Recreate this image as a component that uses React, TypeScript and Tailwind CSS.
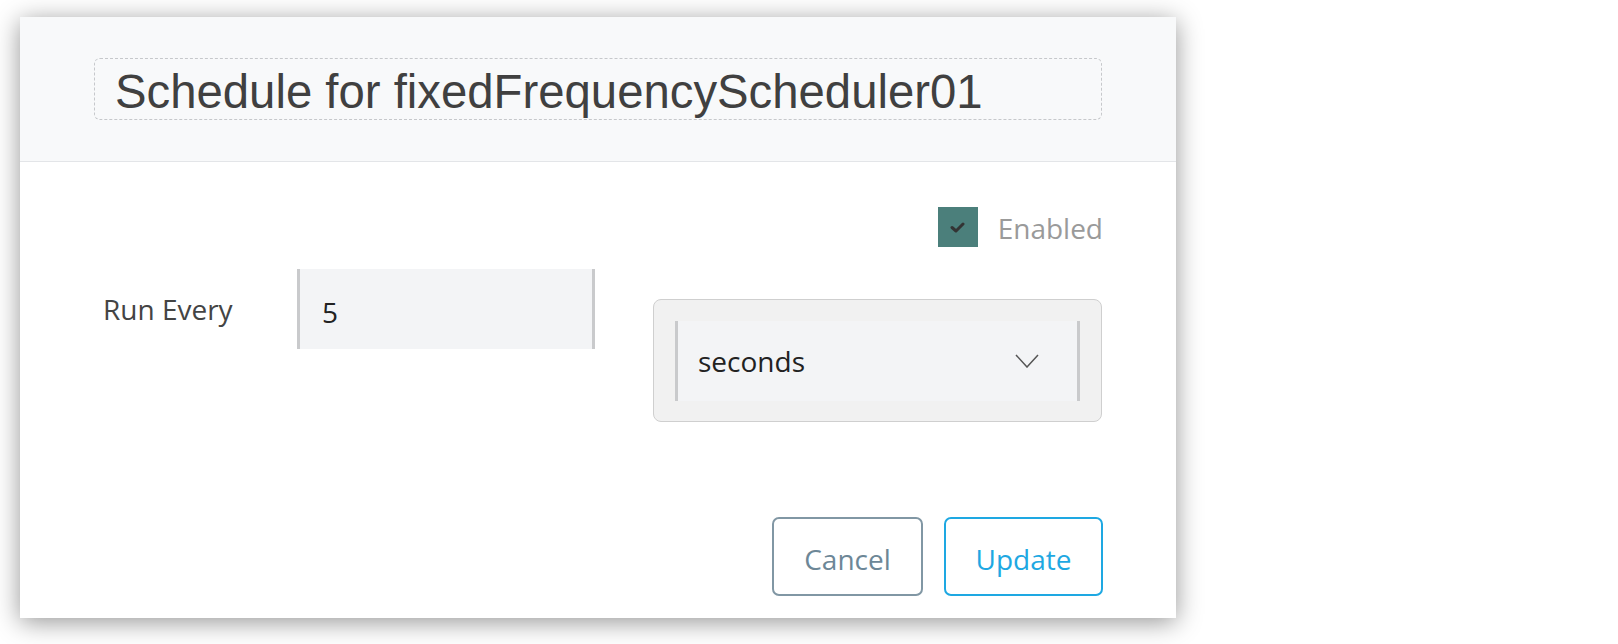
export default function App() {
  return (
    <main className="min-h-screen w-full bg-white pl-[20px] pt-[17px] font-['Open_Sans',sans-serif]">
      <div className="flex h-[601px] w-[1156px] flex-col bg-white shadow-[0_4px_24px_rgba(0,0,0,0.42)]">
        {/* header */}
        <div className="h-[145px] border-b border-[#e3e5e8] bg-[#f8f9fa] px-[74px] pt-[41px]">
          <div className="flex h-[62px] items-center rounded-[6px] border border-dashed border-[#c6c8cb] pl-[20px] pt-[5px]">
            <h1 className="font-['Liberation_Sans',Arial,sans-serif] text-[47.3px] leading-none text-[#404040]">
              Schedule for fixedFrequencyScheduler01
            </h1>
          </div>
        </div>

        {/* body */}
        <div className="flex flex-1 flex-col px-[73px] pt-[45px] pb-[22px]">
          <div className="flex h-[40px] items-center justify-end">
            <div className="flex h-[40px] w-[40px] items-center justify-center bg-[#4b7f7b]">
              <svg width="15" height="11" viewBox="0 0 15 11" fill="none">
                <path d="M2 5.5 L6 9 L13 2" stroke="#333" strokeWidth="3" strokeLinecap="round" strokeLinejoin="round" />
              </svg>
            </div>
            <span className="ml-[20px] pt-[2px] text-[28px] leading-[36px] text-[#9a9a9a]">Enabled</span>
          </div>

          <div className="mt-[22px] flex items-start">
            <div className="w-[204px] pl-[10px] pt-[22px] text-[28px] leading-[36px] text-[#444]">
              Run Every
            </div>
            <div className="flex h-[80px] w-[298px] items-center border-x-[3px] border-[#c9cacc] bg-[#f3f4f6] pl-[22px] pt-[6px] text-[28px] text-[#222]">
              5
            </div>
            <div className="ml-[58px] mt-[30px] h-[123px] w-[449px] rounded-[8px] border border-[#cfcfcf] bg-[#f1f1f1] px-[21px] pt-[21px]">
              <div className="flex h-[80px] items-center justify-between border-x-[3px] border-[#c9cacc] bg-[#f3f4f6] pl-[20px] pr-[38px]">
                <span className="text-[28px] leading-[36px] text-[#222]">seconds</span>
                <svg width="24" height="14" viewBox="0 0 24 14" fill="none">
                  <polyline points="1,1 12,13 23,1" stroke="#555" strokeWidth="1.5" />
                </svg>
              </div>
            </div>
          </div>

          <div className="mt-[95px] flex justify-end gap-[21px]">
            <button className="flex h-[79px] w-[151px] items-center justify-center rounded-[7px] border-2 border-[#8197a4] pt-[5px] text-[28px] leading-[36px] text-[#6d8797]">
              Cancel
            </button>
            <button className="flex h-[79px] w-[159px] items-center justify-center rounded-[7px] border-2 border-[#1ea8e2] pt-[5px] text-[28px] leading-[36px] text-[#1ea8e2]">
              Update
            </button>
          </div>
        </div>
      </div>
    </main>
  );
}
